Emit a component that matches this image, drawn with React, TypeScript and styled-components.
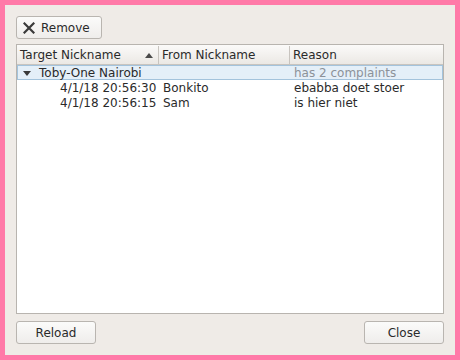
import React from "react";
import styled, { createGlobalStyle } from "styled-components";

const Global = createGlobalStyle`
  html, body { margin: 0; padding: 0; }
  body { font-family: "DejaVu Sans", sans-serif; font-size: 12px; color: #2a2a2a; }
`;

const Frame = styled.div`
  width: 460px;
  height: 360px;
  box-sizing: border-box;
  border: 5px solid #ff7aa8;
  background: #efebe7;
  padding: 11px;
  display: flex;
  flex-direction: column;
`;

const Button = styled.button<{ $w: number; $start?: boolean }>`
  width: ${(p) => p.$w}px;
  height: 23px;
  box-sizing: border-box;
  border: 1px solid #b9b5b0;
  border-radius: 3px;
  background: linear-gradient(#fbfbfa, #efedeb);
  font-family: "DejaVu Sans", sans-serif;
  font-size: 12px;
  color: #2a2a2a;
  display: flex;
  align-items: center;
  justify-content: ${(p) => (p.$start ? "flex-start" : "center")};
  gap: 6px;
  padding: 0 0 0 ${(p) => (p.$start ? 6 : 0)}px;
`;

const TopBar = styled.div`
  display: flex;
  margin-bottom: 5px;
`;

const Tree = styled.div`
  flex: 1;
  border: 1px solid #b8b4af;
  background: #ffffff;
  display: flex;
  flex-direction: column;
`;

const Header = styled.div`
  display: grid;
  grid-template-columns: 142px 131px 1fr;
  height: 20px;
  padding-top: 1px;
  box-sizing: border-box;
  background: linear-gradient(#fbfaf9, #ebe8e4);
  border-bottom: 1px solid #c8c4bf;
`;

const HeaderCell = styled.div<{ $last?: boolean }>`
  display: flex;
  align-items: center;
  justify-content: space-between;
  padding: 0 5px 0 3px;
  border-right: ${(p) => (p.$last ? "none" : "1px solid #c8c4bf")};
  white-space: nowrap;
`;

const Row = styled.div<{ $hl?: boolean }>`
  display: grid;
  grid-template-columns: 142px 131px 1fr;
  height: 15px;
  line-height: 15px;
  box-sizing: border-box;
  border: 1px solid ${(p) => (p.$hl ? "#a3c3dc" : "transparent")};
  background: ${(p) => (p.$hl ? "#e4eff8" : "transparent")};
`;

const Cell = styled.div<{ $indent?: number; $muted?: boolean; $span?: number }>`
  padding-left: ${(p) => p.$indent ?? 3}px;
  white-space: nowrap;
  color: ${(p) => (p.$muted ? "#8c9299" : "#2a2a2a")};
  grid-column: span ${(p) => p.$span ?? 1};
  display: flex;
  align-items: center;
`;

const Arrow = styled.span`
  width: 0;
  height: 0;
  border-left: 4px solid transparent;
  border-right: 4px solid transparent;
  border-top: 5px solid #3a3a3a;
  margin: 0 8px 0 5px;
`;

const Footer = styled.div`
  display: flex;
  justify-content: space-between;
  margin-top: 7px;
`;

export default function App() {
  return (
    <>
      <Global />
      <Frame>
        <TopBar>
          <Button $w={86} $start>
            <svg width="12" height="12" viewBox="0 0 12 12">
              <path d="M1.5 1.5 L10.5 10.5 M10.5 1.5 L1.5 10.5" stroke="#3a3a3a" strokeWidth="2.2" strokeLinecap="square" />
            </svg>
            Remove
          </Button>
        </TopBar>
        <Tree>
          <Header>
            <HeaderCell>
              Target Nickname
              <svg width="8" height="5" viewBox="0 0 8 5">
                <path d="M0 5 L4 0 L8 5 Z" fill="#4a4a4a" />
              </svg>
            </HeaderCell>
            <HeaderCell>From Nickname</HeaderCell>
            <HeaderCell $last>Reason</HeaderCell>
          </Header>
          <Row $hl>
            <Cell $indent={0} $span={2}>
              <Arrow />
              Toby-One Nairobi
            </Cell>
            <Cell $muted>has 2 complaints</Cell>
          </Row>
          <Row>
            <Cell $indent={42}>4/1/18 20:56:30</Cell>
            <Cell>Bonkito</Cell>
            <Cell>ebabba doet stoer</Cell>
          </Row>
          <Row>
            <Cell $indent={42}>4/1/18 20:56:15</Cell>
            <Cell>Sam</Cell>
            <Cell>is hier niet</Cell>
          </Row>
        </Tree>
        <Footer>
          <Button $w={80}>Reload</Button>
          <Button $w={80}>Close</Button>
        </Footer>
      </Frame>
    </>
  );
}
